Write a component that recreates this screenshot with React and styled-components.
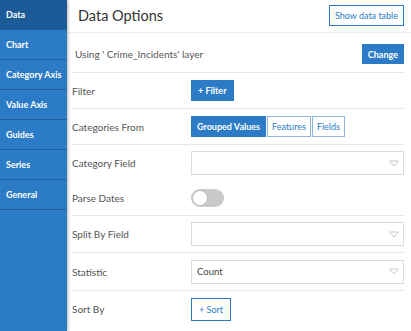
import React from "react";
import styled, { createGlobalStyle } from "styled-components";

const Global = createGlobalStyle`
  html, body { margin: 0; padding: 0; background: #fff; }
  body { width: 411px; height: 331px; overflow: hidden; font-family: Lato, "Noto Sans", sans-serif; }
  * { box-sizing: border-box; }
`;

const Shell = styled.div`
  display: flex;
  width: 411px;
  height: 331px;
`;

const Sidebar = styled.nav`
  width: 67px;
  flex: none;
  background: #2b7bc6;
  box-shadow: 1px 0 3px rgba(0, 0, 0, 0.3);
  position: relative;
  z-index: 1;
  display: flex;
  flex-direction: column;
`;

const NavItem = styled.div`
  height: 30px;
  display: flex;
  align-items: center;
  padding-left: 6px;
  padding-bottom: 1px;
  color: #fff;
  font-size: 9px;
  font-weight: 700;
  white-space: nowrap;
  background: ${(p) => (p.$active ? "#1c5b98" : "transparent")};
  border-bottom: 1px solid #1f5e9b;
`;

const Main = styled.main`
  flex: 1;
  display: flex;
  flex-direction: column;
  min-width: 0;
`;

const Header = styled.header`
  height: 33px;
  display: flex;
  align-items: center;
  justify-content: space-between;
  padding: 0 7px 1px 11px;
  border-bottom: 1px solid #ececec;
`;

const Title = styled.h1`
  margin: 0;
  font-size: 14.5px;
  font-weight: 400;
  color: #333;
`;

const Body = styled.div`
  display: flex;
  flex-direction: column;
  padding: 0 7px 0 5px;
`;

const Row = styled.div`
  height: ${(p) => p.$h}px;
  padding-top: ${(p) => p.$pt || 0}px;
  display: flex;
  align-items: center;
  border-bottom: ${(p) => (p.$noLine ? "none" : "1px solid #e8e8e8")};
`;

const Label = styled.div`
  width: 119px;
  flex: none;
  font-size: 10px;
  color: #555;
  white-space: nowrap;
`;

const Info = styled.div`
  flex: 1;
  font-size: 10px;
  color: #555;
  padding-left: 3px;
`;

const Button = styled.button`
  height: ${(p) => p.$h || 21}px;
  padding: 0 ${(p) => p.$px || 6}px;
  font-family: inherit;
  font-size: 9px;
  font-weight: ${(p) => (p.$solid ? 700 : 400)};
  border: 1px solid ${(p) => (p.$light ? "#8db6e2" : "#2b7bc6")};
  background: ${(p) => (p.$solid ? "#2b7bc6" : "#fff")};
  color: ${(p) => (p.$solid ? "#fff" : "#2b7bc6")};
  white-space: nowrap;
  cursor: pointer;
`;

const Segments = styled.div`
  display: flex;
  gap: 1px;
`;

const Select = styled.div`
  flex: 1;
  height: 24px;
  border: 1px solid #dcdcdc;
  display: flex;
  align-items: center;
  justify-content: space-between;
  padding: 0 4px 0 5px;
  font-size: 9.5px;
  color: #444;
`;

const Toggle = styled.div`
  width: 33px;
  height: 18px;
  border-radius: 9px;
  background: #c9c9c9;
  display: flex;
  align-items: center;
  padding-left: 2px;
`;

const Knob = styled.div`
  width: 14px;
  height: 14px;
  border-radius: 50%;
  background: #fff;
  box-shadow: 0 0 0 0.5px #b5b5b5;
`;

const Caret = () => (
  <svg width="10" height="7" viewBox="0 0 10 7">
    <path d="M0.8 1 H9.2 L5 6 Z" fill="none" stroke="#c8c8c8" strokeWidth="1" />
  </svg>
);

const nav = ["Data", "Chart", "Category Axis", "Value Axis", "Guides", "Series", "General"];

export default function App() {
  return (
    <>
      <Global />
      <Shell>
        <Sidebar>
          {nav.map((n, i) => (
            <NavItem key={n} $active={i === 0}>
              {n}
            </NavItem>
          ))}
        </Sidebar>
        <Main>
          <Header>
            <Title>Data Options</Title>
            <Button $px={5}>Show data table</Button>
          </Header>
          <Body>
            <Row $h={40} $pt={3}>
              <Info>Using ' Crime_Incidents' layer</Info>
              <Button $solid $h={20} $px={5}>Change</Button>
            </Row>
            <Row $h={36}>
              <Label>Filter</Label>
              <Button $solid $px={6}>+ Filter</Button>
            </Row>
            <Row $h={36}>
              <Label>Categories From</Label>
              <Segments>
                <Button $solid $px={5}>Grouped Values</Button>
                <Button $light $px={4}>Features</Button>
                <Button $light $px={4}>Fields</Button>
              </Segments>
            </Row>
            <Row $h={36} $noLine>
              <Label>Category Field</Label>
              <Select>
                <span />
                <Caret />
              </Select>
            </Row>
            <Row $h={35}>
              <Label>Parse Dates</Label>
              <Toggle>
                <Knob />
              </Toggle>
            </Row>
            <Row $h={37}>
              <Label>Split By Field</Label>
              <Select>
                <span />
                <Caret />
              </Select>
            </Row>
            <Row $h={38}>
              <Label>Statistic</Label>
              <Select>
                <span>Count</span>
                <Caret />
              </Select>
            </Row>
            <Row $h={36} $noLine>
              <Label>Sort By</Label>
              <Button $h={23} $px={7}>+ Sort</Button>
            </Row>
          </Body>
        </Main>
      </Shell>
    </>
  );
}
